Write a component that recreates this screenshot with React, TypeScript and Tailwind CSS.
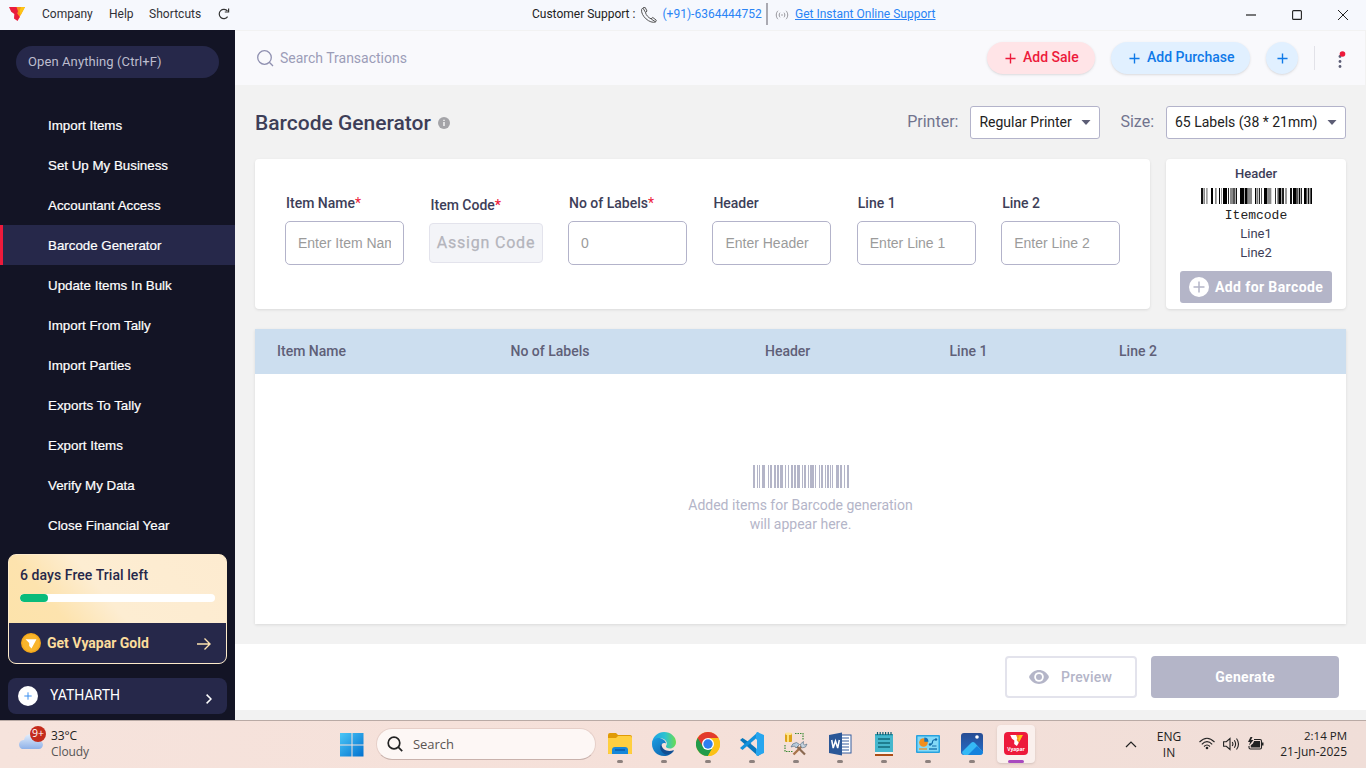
import React from "react";

const MENU = [
  "Import Items",
  "Set Up My Business",
  "Accountant Access",
  "Barcode Generator",
  "Update Items In Bulk",
  "Import From Tally",
  "Import Parties",
  "Exports To Tally",
  "Export Items",
  "Verify My Data",
  "Close Financial Year",
];

// [start, end, fill] in thirds of a pixel
const PREVIEW_BARS: [number, number, string][] = [
  [0, 7, "#111"], [9, 12, "#888"], [15, 17, "#777"], [18, 21, "#bbb"], [30, 36, "#000"], [42, 47, "#888"],
  [54, 57, "#000"], [60, 63, "#999"], [66, 78, "#000"], [81, 84, "#222"], [87, 96, "#888"], [97, 101, "#000"],
  [104, 108, "#111"], [117, 129, "#000"], [131, 140, "#000"], [140, 153, "#888"], [162, 166, "#000"],
  [168, 172, "#777"], [174, 177, "#222"], [180, 183, "#555"], [189, 199, "#000"], [199, 211, "#888"],
  [222, 225, "#333"], [228, 231, "#999"], [232, 241, "#000"], [243, 249, "#222"], [252, 258, "#999"],
  [267, 273, "#111"], [276, 285, "#000"], [286, 290, "#000"], [293, 297, "#000"], [299, 303, "#222"],
  [309, 317, "#000"], [320, 325, "#111"], [328, 333, "#000"],
];

const EMPTY_BARS: [number, number][] = [
  [0, 2], [4, 1], [6, 1], [9, 3], [15, 1], [17, 2], [21, 2], [24, 2], [27, 3], [32, 1], [35, 1], [38, 2],
  [41, 2], [44, 3], [49, 1], [51, 2], [55, 1], [57, 4], [62, 1], [66, 1], [68, 2], [72, 1], [74, 2], [77, 1],
  [79, 1], [83, 3], [87, 2], [91, 1], [94, 2],
];

function Plus({ className }: { className: string }) {
  return (
    <svg viewBox="0 0 12 12" className={className} fill="none" stroke="currentColor" strokeWidth="1.5">
      <path d="M6 .5v11M.5 6h11" />
    </svg>
  );
}

function VyaparMark({ className, white }: { className: string; white?: boolean }) {
  return (
    <svg viewBox="0 0 16 14" className={className}>
      <path d="M6 0H16L9.800 11.500 7 8Z" fill="#f7941d" />
      <path d="M12 0H16L11.500 8.500 10.500 4Z" fill="#fdc415" />
      <path d="M0 0h7.500l1.500 4.200-.8 2.200L10.800 10 8.500 14 5 11.500 5.300 7 2.200 4.800Z" fill={white ? "#fff" : "#ea1c3c"} />
    </svg>
  );
}

function TitleBar() {
  return (
    <header className="flex h-[30px] shrink-0 bg-[#f6f8fd] text-xs text-[#303036]">
      <div className="flex h-7 w-[532px] items-center pl-[9px]">
        <VyaparMark className="h-[14px] w-4" />
        <span className="ml-[17px] w-[67px]">Company</span>
        <span className="w-10">Help</span>
        <span className="w-[69px] tracking-[0.05px]">Shortcuts</span>
        <svg viewBox="0 0 12 12" className="-mt-px h-3 w-3" fill="none" stroke="#333" strokeWidth="1.2">
          <path d="M9.6 8.6A4.6 4.6 0 1 1 9.5 3.2" />
          <path d="M6.8 4H10.600V.4" />
        </svg>
      </div>
      <div className="flex h-7 items-center text-black">
        <span className="w-[109px] whitespace-nowrap text-[#222]">Customer Support :</span>
        <svg viewBox="0 0 16 16" className="mt-0.5 h-4 w-4" fill="none" stroke="#555" strokeWidth="1">
          <path d="M2 .8 4.200.5 6 4 4.500 5.700C5 8 7.500 10.800 10 11.800L11.800 10.500 15.300 13.200 14.500 15C9 17-.5 9 .6 2.300Z" />
          <path d="M2 1.200 4.600 5.500M10.200 12 14.600 14.900" />
        </svg>
        <span className="ml-[5.500px] w-[103.500px] whitespace-nowrap text-[#2a84f5]">(+91)-6364444752</span>
        <span className="h-[22px] w-0.5 bg-[#aaaab2]" />
        <svg viewBox="0 0 14 10" className="ml-[7px] mt-0.5 h-[10px] w-[14px]" fill="none" stroke="#98989e" strokeWidth="1">
          <path d="M3 .8C.7 3 .7 7 3 9.200M11 .8C13.300 3 13.300 7 11 9.200M5 2.700C3.900 4 3.900 6 5 7.300M9 2.700C10.100 4 10.100 6 9 7.300" />
          <circle cx="7" cy="5" r=".8" fill="#98989e" stroke="none" />
        </svg>
        <span className="ml-[6px] whitespace-nowrap text-[#2a84f5] underline">Get Instant Online Support</span>
      </div>
      <div className="ml-auto flex h-[30px] items-center gap-9 pr-[18px]">
        <svg viewBox="0 0 10 10" className="h-[10px] w-[10px]" stroke="#222" strokeWidth="1.2"><path d="M0 5h10" /></svg>
        <svg viewBox="0 0 10 10" className="h-[10px] w-[10px]" fill="none" stroke="#222" strokeWidth="1.100">
          <rect x=".6" y=".6" width="8.800" height="8.800" rx="1" />
        </svg>
        <svg viewBox="0 0 10 10" className="h-[10px] w-[10px]" stroke="#222" strokeWidth="1"><path d="m0 0 10 10M10 0 0 10" /></svg>
      </div>
    </header>
  );
}

function Sidebar() {
  return (
    <aside className="flex w-[235px] shrink-0 flex-col bg-[#131425] pt-4">
      <div className="mx-4 flex h-8 items-center rounded-full bg-[#26284a] pl-3 text-[13px] tracking-[0.1px] text-[#bdbdce]">
        Open Anything (Ctrl+F)
      </div>
      <nav className="mt-[27px] flex flex-col font-['Liberation_Sans',sans-serif] text-[13.333px] text-white [-webkit-text-stroke:0.2px_white]">
        {MENU.map((m) => (
          <div
            key={m}
            className={
              m === "Barcode Generator"
                ? "flex h-10 items-center border-l-[3px] border-[#ed1a3b] bg-[#26284a] pl-[45px] pt-0.5"
                : "flex h-10 items-center pl-12 pt-0.5"
            }
          >
            {m}
          </div>
        ))}
      </nav>
      <div className="mx-2 mt-[9px] flex h-[110px] flex-col overflow-hidden rounded-lg border border-[#fdebcb] bg-[linear-gradient(50deg,#fce3a9_0%,#fde3ae_30%,#fdedd2_50%,#fdebd0_100%)]">
        <div className="h-[68px] px-[11px] pt-[10px]">
          <div className="text-sm font-medium leading-5 tracking-[0.07px] text-[#26284a]">6 days Free Trial left</div>
          <div className="mt-[9px] h-2 w-[195px] overflow-hidden rounded bg-white">
            <div className="h-2 w-7 rounded bg-[#0abb7b]" />
          </div>
        </div>
        <div className="flex flex-1 items-center bg-[#26284a] pl-3 pr-[15px]">
          <svg viewBox="0 0 20 20" className="h-5 w-5">
            <circle cx="10" cy="10" r="10" fill="#f5a81b" />
            <circle cx="10" cy="10" r="8.500" fill="#f9b52c" />
            <path d="M4.500 6.200H15.500L10.500 15.500 8.200 13V10Z" fill="#fff" />
          </svg>
          <span className="ml-[6px] text-sm font-bold text-[#fbdc9c]">Get Vyapar Gold</span>
          <svg viewBox="0 0 14 12" className="ml-auto mt-0.5 h-3 w-[14px]" fill="none" stroke="#fde2b0" strokeWidth="1.400">
            <path d="M0 6h13M7.500.500 13 6l-5.500 5.500" />
          </svg>
        </div>
      </div>
      <div className="mx-2 mt-[14px] flex h-9 items-center rounded-lg bg-[#26284a] pl-[10px] pr-[15px] text-white">
        <span className="flex h-5 w-5 items-center justify-center rounded-full bg-white text-[#3b8ff0]">
          <Plus className="h-2 w-2" />
        </span>
        <span className="-mt-0.5 ml-3 text-sm">YATHARTH</span>
        <svg viewBox="0 0 6 10" className="ml-auto mt-[6px] h-[10px] w-[6px]" fill="none" stroke="#fff" strokeWidth="1.500">
          <path d="m.6.600 4.400 4.400-4.400 4.400" />
        </svg>
      </div>
    </aside>
  );
}

function TopBar() {
  return (
    <div className="mt-px mr-px flex h-[54px] items-center bg-[#f9f9fc] pl-[22px]">
      <svg viewBox="0 0 17 17" className="h-[17px] w-[17px]" fill="none" stroke="#8f90b0" strokeWidth="1.300">
        <circle cx="7.500" cy="7.500" r="6.800" />
        <path d="m12.300 12.300 3.700 3.700" />
      </svg>
      <span className="ml-[6px] text-sm text-[#9c9db8]">Search Transactions</span>
      <div className="ml-auto flex items-center text-sm font-medium">
        <div className="flex h-8 w-[108px] items-center rounded-full bg-[#ffe4e7] pl-[18px] text-[#ed1a3b] shadow-sm">
          <Plus className="mr-[7px] h-[11px] w-[11px]" /><span className="-mt-0.5">Add Sale</span>
        </div>
        <div className="ml-4 flex h-8 w-[139px] items-center rounded-full bg-[#e1f0ff] pl-[18px] text-[#0f79e8] shadow-sm">
          <Plus className="mr-[7px] h-[11px] w-[11px]" /><span className="-mt-0.5">Add Purchase</span>
        </div>
        <div className="ml-4 flex h-8 w-8 items-center justify-center rounded-full bg-[#e1f0ff] text-[#0f79e8] shadow-sm">
          <Plus className="h-[11px] w-[11px]" />
        </div>
        <div className="ml-4 h-6 w-px bg-[#e2e2e8]" />
        <svg viewBox="0 0 10 20" className="ml-[22px] mr-[18px] mt-[3px] h-5 w-[10px]" fill="#5c5d75">
          <circle cx="3" cy="6.500" r="1.400" /><circle cx="3" cy="11.500" r="1.400" /><circle cx="3" cy="16.500" r="1.400" />
          <circle cx="5.500" cy="4" r="2.800" fill="#ed1a3b" />
        </svg>
      </div>
    </div>
  );
}

function Select({ label, className }: { label: string; className: string }) {
  return (
    <div className={"flex h-[33px] items-center justify-between rounded-[3px] border border-[#b3b3ca] bg-white pl-2 pr-2 text-sm text-[#212121] " + className}>
      <span className="-mt-0.5 whitespace-nowrap">{label}</span>
      <svg viewBox="0 0 10 5" className="h-[5px] w-[10px]" fill="#5c5d75"><path d="M.5 0h9L5 5Z" /></svg>
    </div>
  );
}

function Field({ label, placeholder, required }: { label: string; placeholder: string; required?: boolean }) {
  return (
    <label className="block w-[119px]">
      <span className="block pl-px text-sm font-medium leading-5 text-[#3d3e58]">
        {label}
        {required && <span className="font-normal text-[#ed1a3b]">*</span>}
      </span>
      <input
        placeholder={placeholder}
        className="mt-2 block h-11 w-full rounded-[5px] border border-[#b3b3ca] bg-white px-3 font-['Liberation_Sans',sans-serif] text-sm placeholder:text-[#9b9b9b]"
      />
    </label>
  );
}

function ItemForm() {
  return (
    <section className="flex h-[150px] w-[895px] rounded-sm bg-white pl-[30px] pt-[34px] shadow-[0_1px_3px_rgba(0,0,0,0.1)]">
      <Field label="Item Name" placeholder="Enter Item Name" required />
      <div className="ml-[25px] mt-0.5 w-[114px]">
        <div className="pl-[1.500px] text-sm font-medium leading-5 text-[#3d3e58]">
          Item Code<span className="text-[#ed1a3b]">*</span>
        </div>
        <div className="mt-2 flex h-10 items-center justify-center whitespace-nowrap rounded-[4px] border border-[#e3e3ec] bg-[#f3f4f8] text-base font-normal tracking-[0.8px] text-[#b4b4bc] [-webkit-text-stroke:0.25px_#b4b4bc]">
          Assign Code
        </div>
      </div>
      <div className="ml-[25px] flex gap-[25.4px]">
        <Field label="No of Labels" placeholder="0" required />
        <Field label="Header" placeholder="Enter Header" />
        <Field label="Line 1" placeholder="Enter Line 1" />
        <Field label="Line 2" placeholder="Enter Line 2" />
      </div>
    </section>
  );
}

function LabelPreview() {
  return (
    <section className="flex h-[150px] w-[180px] flex-col items-center rounded-sm bg-white pt-[5px] text-[13px] text-[#3d3e58] shadow-[0_1px_3px_rgba(0,0,0,0.1)]">
      <div className="h-[19px] font-medium leading-[19px]">Header</div>
      <svg viewBox="0 0 333 16" preserveAspectRatio="none" className="mt-[5px] h-4 w-[111px]" shapeRendering="geometricPrecision">
        {PREVIEW_BARS.map(([a, b, c]) => <rect key={a} x={a} y="0" width={b - a} height="16" fill={c} />)}
      </svg>
      <div className="mt-0.5 h-[18px] font-['Liberation_Mono',monospace] leading-5 text-[#222]">Itemcode</div>
      <div className="h-[19px] leading-[19px]">Line1</div>
      <div className="h-[19px] leading-[19px]">Line2</div>
      <div className="mt-[9px] flex h-8 w-[152px] items-center whitespace-nowrap rounded-[3px] bg-[#b4b5c8] pl-[9px] text-sm font-bold tracking-[0.4px] text-white">
        <span className="mr-[6px] flex h-5 w-5 items-center justify-center rounded-full bg-white text-[#b4b5c8]">
          <Plus className="h-3 w-3" />
        </span>
        Add for Barcode
      </div>
    </section>
  );
}

function LabelTable() {
  return (
    <section className="mt-5 flex h-[295px] flex-col bg-white shadow-[0_1px_3px_rgba(0,0,0,0.1)]">
      <div className="flex h-[45px] bg-[#ccdeef] pl-[22px] text-sm font-medium leading-[44px] text-[#5f6078]">
        <span className="w-[233.500px]">Item Name</span>
        <span className="w-[254.500px]">No of Labels</span>
        <span className="w-[184.500px]">Header</span>
        <span className="w-[169.500px]">Line 1</span>
        <span>Line 2</span>
      </div>
      <div className="flex flex-1 flex-col items-center pt-[91px] text-sm leading-[19px] text-[#b4b5c8]">
        <svg viewBox="0 0 96 23" className="h-[23px] w-24" shapeRendering="crispEdges" fill="#b4b5c8">
          {EMPTY_BARS.map(([x, w]) => <rect key={x} x={x} y="0" width={w} height="23" />)}
        </svg>
        <div className="mt-2 text-center">
          Added items for Barcode generation<br />will appear here.
        </div>
      </div>
    </section>
  );
}

function ActionBar() {
  return (
    <div className="mt-5 flex h-[66px] items-start justify-end gap-[14px] bg-white pr-[27px] pt-3 text-sm font-medium">
      <div className="flex h-[42px] w-[132px] items-center rounded border-2 border-[#e3e3ec] pl-[22px] text-[#b4b5c8]">
        <svg viewBox="0 0 20 14" className="mr-3 h-[14px] w-5">
          <path d="M0 7C4-2.300 16-2.300 20 7 16 16.300 4 16.300 0 7Z" fill="#b4b5c8" />
          <circle cx="10" cy="7" r="4.800" fill="#fff" /><circle cx="10" cy="7" r="3" fill="#b4b5c8" />
        </svg>
        <span className="tracking-[0.2px]">Preview</span>
      </div>
      <div className="flex h-[42px] w-[188px] items-center justify-center rounded bg-[#b4b5c8] font-bold tracking-[0.3px] text-white">Generate</div>
    </div>
  );
}

const APPS: { name: string; art: React.ReactNode }[] = [
  {
    name: "files",
    art: (
      <>
        <path d="M0 3Q0 1 2 1h6l2 2h12q2 0 2 2v16q0 1-1 1H1q-1 0-1-1Z" fill="#e09a05" />
        <path d="M0 6h8l2-2h12q2 0 2 2v15q0 1-1 1H1q-1 0-1-1Z" fill="#ffcf3f" />
        <path d="M4 22v-4q0-3 3-3h10q3 0 3 3v4Z" fill="#1687d9" /><path d="M7 18h10" stroke="#0b5da8" strokeWidth="1.500" />
      </>
    ),
  },
  {
    name: "edge",
    art: (
      <>
        <defs>
          <linearGradient id="edgeTop"><stop offset="0" stopColor="#1ca0e4" /><stop offset=".55" stopColor="#2cc3d0" /><stop offset="1" stopColor="#6bdc4e" /></linearGradient>
          <linearGradient id="edgeLow" x2="1" y2="1"><stop offset="0" stopColor="#1b9de2" /><stop offset="1" stopColor="#0c59a4" /></linearGradient>
        </defs>
        <path d="M0 11C1 4 6 0 12 0c7 0 12 5 12 10 0 4-3 6.500-6 6.500-3 0-4.500-1.500-4-2.500 2-2.500.5-6.500-4-7.500C6 6 2 8 0 11Z" fill="url(#edgeTop)" />
        <path d="M0 12C0 7 5 5 9 6.500c3.500 1 5 3.500 5 5-3-1.500-5 .5-5 3.500 0 3 3 7 9 5.500L22 18.500C20 22 16 24 12 24 5 24 0 18.500 0 12Z" fill="url(#edgeLow)" />
        <path d="M9.200 12C7 16 9 21 14 22.500c3 .5 6.500-1.500 8-4.500-6 2.500-12 0-12.800-6Z" fill="#124d91" />
      </>
    ),
  },
  {
    name: "chrome",
    art: (
      <>
        <circle cx="12" cy="12" r="12" fill="#fbc116" />
        <path d="M12 12 1.600 6A12 12 0 0 0 12 24l5-9Z" fill="#229b4b" />
        <path d="M1.600 6a12 12 0 0 1 20.800 0L12 7 7 14.500Z" fill="#e23b2e" />
        <path d="M12 6h10.400A12 12 0 0 1 12 24l5.200-9Z" fill="#fbc116" />
        <circle cx="12" cy="12" r="6" fill="#fff" /><circle cx="12" cy="12" r="4.700" fill="#2e7ef0" />
      </>
    ),
  },
  {
    name: "code",
    art: (
      <>
        <path d="m0 8 2.500-2L24 20l-6 4Z" fill="#0878bd" /><path d="m0 16 2.500 2L20 3l-2-3Z" fill="#1291dc" />
        <path d="m17 0 7 3v18l-7 3-1-1.500V1.500Z" fill="#27a6ef" /><path d="M17 7v10l-6-5Z" fill="#f3dfda" />
      </>
    ),
  },
  {
    name: "config",
    art: (
      <>
        <path d="M11 1.500h8v7M1 13v6.500h8" fill="none" stroke="#3d8b36" strokeWidth="1.200" strokeDasharray="1.500 1" />
        <rect x="1" y="1" width="7" height="9" rx="1" fill="#dda31a" /><path d="M3 2h2v8H3Z" fill="#ffe07a" /><ellipse cx="4.500" cy="1.800" rx="3.500" ry="1.300" fill="#ffe392" />
        <path d="m9.500 22.500 9-9" stroke="#a9744a" strokeWidth="2.400" /><path d="m12 13.500 9 9" stroke="#8b6a52" strokeWidth="2.200" />
        <path d="M7 15q1-4 5.500-4.500l3 2-3.500 3.500-1.500-2Z" fill="#b8cbdc" stroke="#5f7488" strokeWidth=".7" />
        <path d="m17 15-.5-3 3-2.500-.3 2.500 1.600 1 2.200-1-1.500 3-2.800.8Z" fill="#c6d3de" stroke="#5f7488" strokeWidth=".7" />
      </>
    ),
  },
  {
    name: "word",
    art: (
      <>
        <rect x="11" y="3" width="12" height="18" fill="#fff" stroke="#345c9e" />
        <path d="M14 6h7M14 9h7M14 12h7M14 15h7M14 18h7" stroke="#345c9e" strokeWidth="1.200" />
        <path d="M1 3 14 .5v23L1 21Z" fill="#2b5797" />
        <path d="m3.700 8 1.500 8L7.500 9l2.200 7 1.600-8" fill="none" stroke="#fff" strokeWidth="1.500" />
      </>
    ),
  },
  {
    name: "notes",
    art: (
      <>
        <path d="M3 2h18v19H3Z" fill="#45b7cd" /><path d="M3 2h18v1.500H3Z" fill="#2c9db2" />
        <path d="M5.500 0v3M8.200 0v3M10.900 0v3M13.600 0v3M16.300 0v3M19 0v3" stroke="#175d6e" strokeWidth="1.200" />
        <path d="M6 7h12M6 11h12M6 15h12" stroke="#126b7c" strokeWidth="1.500" />
        <path d="M3 20h18v2H3Z" fill="#f8f3ed" /><path d="M3 22h18v2H3Z" fill="#ac4d16" />
      </>
    ),
  },
  {
    name: "panel",
    art: (
      <>
        <rect y="3" width="24" height="18" rx="1" fill="#28a2df" /><rect x="1.500" y="4.500" width="21" height="15" fill="#84d9f7" />
        <circle cx="7.500" cy="10.500" r="4.300" fill="#f28e1c" /><path d="M8.300 9.700V5.500A4.300 4.300 0 0 1 12.500 9.700Z" fill="#1673b5" />
        <path d="M13.500 12.500q3 0 3-2.500t3.500-2.500M16 14h4.500" stroke="#126ba9" strokeWidth="1.200" fill="none" />
        <circle cx="20" cy="7.500" r="1.200" fill="#126ba9" /><circle cx="14" cy="12.500" r="1.200" fill="#126ba9" />
        <path d="M3 17h8" stroke="#ee8f20" strokeWidth="1.300" /><path d="M13 17h8" stroke="#126ba9" strokeWidth="1.300" />
      </>
    ),
  },
  {
    name: "photos",
    art: (
      <>
        <defs><linearGradient id="photoSky" x2="0" y2="1"><stop stopColor="#284c93" /><stop offset="1" stopColor="#246eca" /></linearGradient></defs>
        <rect x="1" y="1" width="22" height="22" rx="3" fill="url(#photoSky)" />
        <path d="m2 20 9-9q2-2 4 0l8 9q-1 3-3 3H4q-2-1-2-3Z" fill="#35b9f5" /><path d="m14 17 3-3 6 6q-1 3-3 3H8Z" fill="#1682dd" />
        <circle cx="17" cy="5" r="1.800" fill="#fff" />
      </>
    ),
  },
];

function Taskbar() {
  return (
    <footer className="flex h-12 shrink-0 border-t border-[#b9aaa5] bg-[linear-gradient(90deg,#f6e3dc,#f5e0d9_50%,#f0ded8)] font-['Open_Sans','Noto_Sans',sans-serif] text-[12px] text-[#222]">
      <div className="flex w-[340px] pl-[18px] pt-[5px]">
        <div className="relative h-8 w-8">
          <svg viewBox="0 0 28 26" className="h-[26px] w-7">
            <defs><linearGradient id="cloud" x2="0" y2="1"><stop stopColor="#e4effc" /><stop offset="1" stopColor="#8fb1e8" /></linearGradient></defs>
            <path d="M4 23q-3-1-3-5 1-4 5-4 1-6 7-6 6 0 7 6 5 1 5 5-1 4-4 4Z" fill="url(#cloud)" />
          </svg>
          <span className="absolute left-3 top-0 flex h-4 w-4 items-center justify-center rounded-full bg-[#c42b1c] text-[10.500px] text-white">9+</span>
        </div>
        <div className="ml-px leading-4">
          <div className="pt-0.5 tracking-[-0.1px]">33°C</div>
          <div className="tracking-[-0.1px] text-[#555]">Cloudy</div>
        </div>
      </div>
      <div className="flex items-center">
        <svg viewBox="0 0 24 24" className="h-6 w-6">
          <defs><linearGradient id="win" x1="0" y1="0" x2="24" y2="24" gradientUnits="userSpaceOnUse"><stop stopColor="#4bc7f7" /><stop offset="1" stopColor="#006fce" /></linearGradient></defs>
          <path d="M0 0h11.500v11.500H0ZM12.500 0h11v11.500h-11ZM0 12.500h11.500v11H0ZM12.500 12.500h11v11h-11Z" fill="url(#win)" />
        </svg>
        <div className="-mt-px ml-3 flex h-8 w-[220px] items-center rounded-full border border-[#e6cfc8] border-b-[#c9b2ac] bg-[#fdf7f5] pl-[10px] text-[#5a5452]">
          <svg viewBox="0 0 16 16" className="mr-[10px] h-4 w-4" fill="none" stroke="#222" strokeWidth="1.700">
            <circle cx="7" cy="7" r="5.800" /><path d="m11.200 11.200 4 4" />
          </svg>
          <span className="pt-px text-[13px] tracking-[-0.05px]">Search</span>
        </div>
        <div className="ml-0.5 flex">
          {APPS.map((a) => (
            <div key={a.name} className="flex h-[47px] w-11 flex-col items-center pt-[11px]">
              <svg viewBox="0 0 24 24" className="h-6 w-6">{a.art}</svg>
              <span className="mt-[4px] h-[3px] w-[6px] rounded-full bg-[#8d817e]" />
            </div>
          ))}
          <div className="mx-[3px] mt-1 flex h-[38px] w-[38px] flex-col items-center rounded bg-[#faf0ed] pt-[7px] shadow-sm">
            <div className="flex h-[23px] w-6 flex-col items-center rounded-sm bg-[#ed1a3b] pt-[3px]">
              <VyaparMark white className="h-[11px] w-[13px]" />
              <span className="-mt-px text-[5px] font-bold leading-[8px] text-white">Vyapar</span>
            </div>
            <span className="mt-[5px] h-[3px] w-4 rounded-full bg-[#a84abf]" />
          </div>
        </div>
      </div>
      <div className="ml-auto flex items-center pr-[19px]">
        <svg viewBox="0 0 12 7" className="h-[7px] w-3" fill="none" stroke="#222" strokeWidth="1.200"><path d="m1 6 5-5 5 5" /></svg>
        <div className="ml-[18px] w-[28px] text-center leading-4">ENG<br />IN</div>
        <svg viewBox="0 0 16 13" className="ml-[16px] -mt-0.5 h-[13px] w-4" fill="none" stroke="#222" strokeWidth="1.100">
          <path d="M.5 5Q8-2.500 15.500 5M2.800 7.300Q8 2 13.200 7.300M5 9.500Q8 6.500 11 9.500" /><circle cx="8" cy="11" r="1.300" fill="#222" stroke="none" />
        </svg>
        <svg viewBox="0 0 17 14" className="ml-2 -mt-0.5 h-[14px] w-[17px]" fill="none" stroke="#222" strokeWidth="1.100">
          <path d="M.6 4.700h2.700L7 1.500v11L3.300 9.300H.6ZM9.200 5q1.400 2 0 4M11.300 3.300q2.600 3.700 0 7.400M13.500 1.500q4 5.500 0 11" />
        </svg>
        <svg viewBox="0 0 17 14" className="ml-[7px] -mt-0.5 h-[14px] w-[17px]" fill="none" stroke="#222" strokeWidth="1.100">
          <path d="M7 2.500h6q1.500 0 1.500 1.500v6.500Q14.500 12 13 12H3.500Q2 12 2 10.500V9" /><path d="M7.500 4.500h5v5.500H4.300V8.500l2-1.500Z" fill="#222" />
          <path d="M3.500 0 1 5h2L2 8.500 6.500 3H4L5.500 0ZM15 5.500h1.500v3H15Z" fill="#222" stroke="none" />
        </svg>
        <div className="-mt-px ml-[15px] w-[68px] whitespace-nowrap text-right text-[11.500px] leading-4">2:14 PM<br /><span className="text-[12px]">21-Jun-2025</span></div>
      </div>
    </footer>
  );
}

export default function App() {
  return (
    <div className="flex h-[768px] w-[1366px] flex-col overflow-hidden bg-[#f2f2f2] font-['Roboto',sans-serif]">
      <TitleBar />
      <div className="flex h-[690px] shrink-0">
        <Sidebar />
        <main className="flex min-w-0 flex-1 flex-col">
          <TopBar />
          <div className="flex flex-col px-5">
            <div className="mt-[21px] flex h-[33px] items-center">
              <h1 className="text-[21px] font-medium leading-6 text-[#3d3e58]">Barcode Generator</h1>
              <svg viewBox="0 0 12 12" className="ml-[7px] h-3 w-3">
                <circle cx="6" cy="6" r="6" fill="#a4a4a8" /><path d="M6 5v4M6 2.700V4" stroke="#fff" strokeWidth="1.300" />
              </svg>
              <span className="-mt-0.5 ml-auto text-base text-[#71748e]">Printer:</span>
              <Select label="Regular Printer" className="ml-3 w-[130px]" />
              <span className="-mt-0.5 ml-5 text-base text-[#71748e]">Size:</span>
              <Select label="65 Labels (38 * 21mm)" className="ml-3 w-[180px]" />
            </div>
            <div className="mt-5 flex justify-between">
              <ItemForm />
              <LabelPreview />
            </div>
            <LabelTable />
          </div>
          <ActionBar />
        </main>
      </div>
      <Taskbar />
    </div>
  );
}
